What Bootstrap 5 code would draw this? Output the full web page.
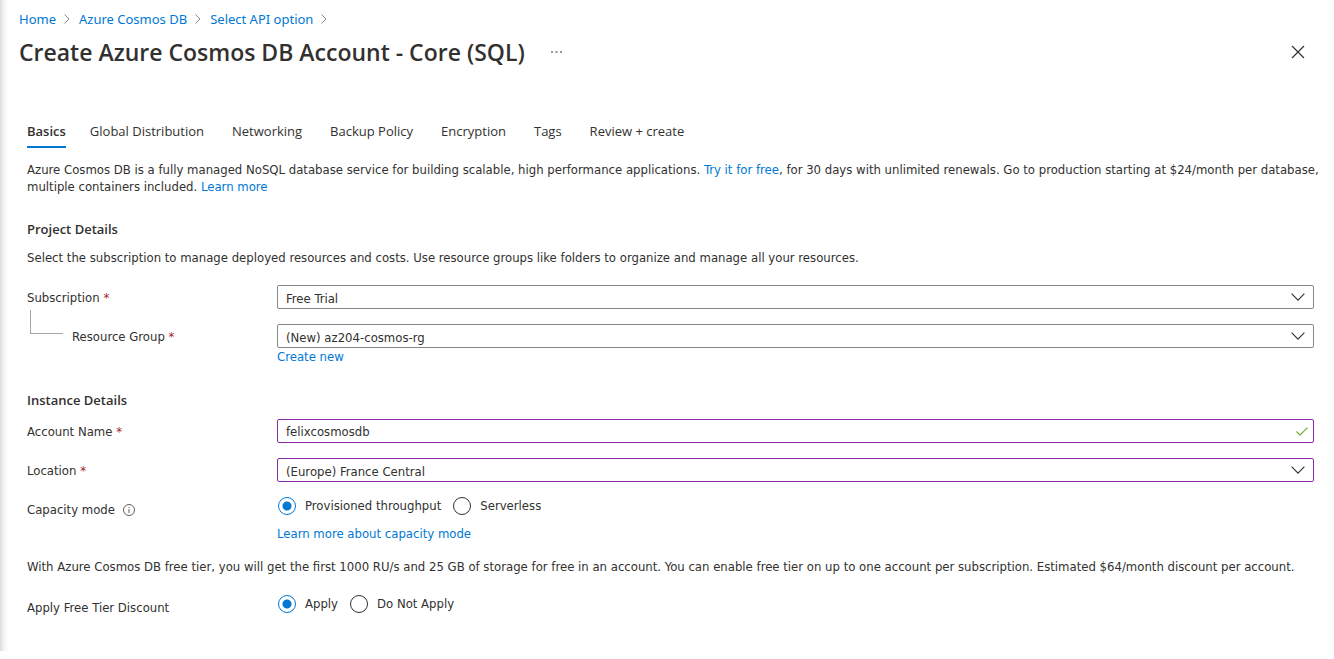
<!DOCTYPE html>
<html lang="en">
<head>
<meta charset="utf-8">
<meta name="viewport" content="width=device-width, initial-scale=1">
<title>Create Azure Cosmos DB Account - Core (SQL)</title>
<link href="https://cdn.jsdelivr.net/npm/bootstrap@5.3.0/dist/css/bootstrap.min.css" rel="stylesheet">
<style>
  :root { --az-blue: #0078d4; --az-text: #323130; --az-line: #8a8886; --az-edit: #8a2da5; }
  body { font-family: "DejaVu Sans Condensed", "Open Sans", sans-serif; font-size: 13px; line-height: 17px; color: var(--az-text); background: #fff; }
  a { color: var(--az-blue); text-decoration: none; }
  a:hover { text-decoration: underline; }
  .blade { min-height: calc(100vh - 8px); background: linear-gradient(to right, #dcdcdc, #f4f4f4 4px, #fff 9px) no-repeat left top / 9px 100%; }
  .crumbs { font-family: "Noto Sans", sans-serif; font-size: 13px; line-height: 18px; padding: 10px 20px 0 19px; gap: 8px; }
  .crumbs svg { margin-right: 1px; }
  .blade-title, .section-title, .blade-tabs { font-family: "Open Sans", sans-serif; }
  .blade-title { font-size: 23px; line-height: 32px; font-weight: 600; margin: 0; }
  .title-row { padding: 8px 28px 0 19px; }
  .icon-btn { border: 0; background: none; padding: 0; line-height: 0; color: var(--az-text); }
  .blade-body { padding: 52px 20px 0 27px; }
  .blade-tabs { gap: 28px; line-height: 18px; margin-bottom: 13px; }
  .blade-tabs .nav-link { color: var(--az-text); padding: 2px 0 6px; border-bottom: 2px solid transparent; }
  .blade-tabs .nav-link.active { font-weight: 600; border-bottom-color: var(--az-blue); }
  .blade-tabs .nav-item:first-child { margin-right: -4px; }
  .section-title { font-size: 13px; line-height: 18px; font-weight: 600; margin: 0; }
  .section-title.instance { margin: 25px 0 10px; }
  .lead-in { margin: 0 -12px 25px 0; }
  .intro { margin: 11px 0 19px; }
  .field-row { display: grid; grid-template-columns: 250px minmax(0, 1fr); margin-bottom: 15px; }
  .field-row > label, .field-row > .field-name { line-height: 26px; height: 24px; }
  .field-row > .field-name.d-flex { height: 26px; }
  .field-link { display: block; line-height: 18px; }
  .choices + .field-link { margin-top: 10px; }
  .req { color: #a4262c; }
  .az-field.form-control, .az-field.form-select { font-size: 13px; line-height: 18px; height: 24px; min-height: 0; padding: 2px 32px 2px 8px; color: var(--az-text); border: 1px solid var(--az-line); border-radius: 2px; }
  .az-field.form-select { padding-top: 4px; padding-bottom: 0; background-image: url("data:image/svg+xml,%3Csvg xmlns='http://www.w3.org/2000/svg' viewBox='0 0 14 8'%3E%3Cpath d='M.6.7 7 7.1 13.4.7' fill='none' stroke='%23323130' stroke-width='1.1'/%3E%3C/svg%3E"); background-size: 14px 8px; background-position: right 8px center; }
  .az-field.form-control { background: url("data:image/svg+xml,%3Csvg xmlns='http://www.w3.org/2000/svg' viewBox='0 0 12 9'%3E%3Cpath d='M.5 4.5 4 8 11.6.6' fill='none' stroke='%236bb32e' stroke-width='1.2'/%3E%3C/svg%3E") no-repeat right 5px center / 12px 9px; }
  .az-field.edited.form-control, .az-field.edited.form-select { border-color: var(--az-edit); }
  .tree-label { padding-left: 45px; position: relative; }
  .tree-label::before { content: ""; position: absolute; left: 3px; top: -14px; width: 33px; height: 24px; border-left: 1px solid #a6a6a6; border-bottom: 1px solid #a6a6a6; }
  .choices { display: flex; flex-wrap: wrap; align-items: center; gap: 12px; line-height: 18px; padding-left: 1px; }
  .choices label { display: flex; align-items: center; gap: 9px; }
  .choices input { appearance: none; width: 18px; height: 18px; margin: 0; border: 1px solid var(--az-text); border-radius: 50%; }
  .choices input:checked { border-color: var(--az-blue); background: radial-gradient(circle, var(--az-blue) 4px, transparent 5px); }
</style>
</head>
<body>
<main class="blade">
  <nav class="crumbs d-flex align-items-center" aria-label="Breadcrumb">
    <a href="#">Home</a>
    <svg width="6" height="10" viewBox="0 0 6 10" fill="none" stroke="#8a8886" aria-hidden="true"><path d="M.5.5 5 5 .5 9.500"/></svg>
    <a href="#">Azure Cosmos DB</a>
    <svg width="6" height="10" viewBox="0 0 6 10" fill="none" stroke="#8a8886" aria-hidden="true"><path d="M.5.5 5 5 .5 9.500"/></svg>
    <a href="#">Select API option</a>
    <svg width="6" height="10" viewBox="0 0 6 10" fill="none" stroke="#8a8886" aria-hidden="true"><path d="M.5.5 5 5 .5 9.500"/></svg>
  </nav>
  <header class="title-row d-flex align-items-center">
    <h1 class="blade-title">Create Azure Cosmos DB Account - Core (SQL)</h1>
    <button class="icon-btn ms-4" type="button" aria-label="More"><svg width="14" height="4" viewBox="0 0 14 4" fill="currentColor"><path d="M2 1.500h2v1H2zM6.500 1.500h2v1h-2zM11 1.500h2v1h-2z"/></svg></button>
    <button class="icon-btn ms-auto" type="button" aria-label="Close"><svg width="16" height="16" viewBox="0 0 16 16" fill="none" stroke="currentColor" stroke-width="1.2"><path d="m2 2 12 12M14 2 2 14"/></svg></button>
  </header>

  <form class="blade-body">
    <ul class="blade-tabs nav">
      <li class="nav-item"><a class="nav-link active" aria-current="page" href="#">Basics</a></li>
      <li class="nav-item"><a class="nav-link" href="#">Global Distribution</a></li>
      <li class="nav-item"><a class="nav-link" href="#">Networking</a></li>
      <li class="nav-item"><a class="nav-link" href="#">Backup Policy</a></li>
      <li class="nav-item"><a class="nav-link" href="#">Encryption</a></li>
      <li class="nav-item"><a class="nav-link" href="#">Tags</a></li>
      <li class="nav-item"><a class="nav-link" href="#">Review + create</a></li>
    </ul>
    <p class="lead-in">Azure Cosmos DB is a fully managed NoSQL database service for building scalable, high performance applications. <a href="#">Try it for free</a>, for 30 days with unlimited renewals. Go to production starting at $24/month per database, multiple containers included. <a href="#">Learn more</a></p>

    <h2 class="section-title">Project Details</h2>
    <p class="intro">Select the subscription to manage deployed resources and costs. Use resource groups like folders to organize and manage all your resources.</p>
    <div class="field-row">
      <label for="sub">Subscription <span class="req">*</span></label>
      <select id="sub" class="form-select az-field"><option>Free Trial</option></select>
    </div>
    <div class="field-row">
      <label for="rg" class="tree-label">Resource Group <span class="req">*</span></label>
      <div>
        <select id="rg" class="form-select az-field"><option>(New) az204-cosmos-rg</option></select>
        <a href="#" class="field-link">Create new</a>
      </div>
    </div>

    <h2 class="section-title instance">Instance Details</h2>
    <div class="field-row">
      <label for="acct">Account Name <span class="req">*</span></label>
      <input id="acct" type="text" class="form-control az-field edited" value="felixcosmosdb">
    </div>
    <div class="field-row">
      <label for="loc">Location <span class="req">*</span></label>
      <select id="loc" class="form-select az-field edited"><option>(Europe) France Central</option></select>
    </div>
    <div class="field-row" role="radiogroup" aria-labelledby="cap">
      <div id="cap" class="field-name d-flex align-items-center gap-2">Capacity mode
        <svg width="12" height="12" viewBox="0 0 12 12" fill="none" stroke="#605e5c" aria-hidden="true"><circle cx="6" cy="6" r="5.500"/><path d="M6 5v4M6 3v1"/></svg>
      </div>
      <div>
        <div class="choices">
          <label><input type="radio" name="capacity" checked>Provisioned throughput</label>
          <label><input type="radio" name="capacity">Serverless</label>
        </div>
        <a href="#" class="field-link">Learn more about capacity mode</a>
      </div>
    </div>
    <p class="mb-3 pb-1">With Azure Cosmos DB free tier, you will get the first 1000 RU/s and 25 GB of storage for free in an account. You can enable free tier on up to one account per subscription. Estimated $64/month discount per account.</p>
    <div class="field-row mb-0" role="radiogroup" aria-labelledby="tier">
      <div id="tier" class="field-name">Apply Free Tier Discount</div>
      <div class="choices align-self-start">
        <label><input type="radio" name="freetier" checked>Apply</label>
        <label><input type="radio" name="freetier">Do Not Apply</label>
      </div>
    </div>
  </form>
</main>
<script src="https://cdn.jsdelivr.net/npm/bootstrap@5.3.0/dist/js/bootstrap.bundle.min.js"></script>
</body>
</html>
